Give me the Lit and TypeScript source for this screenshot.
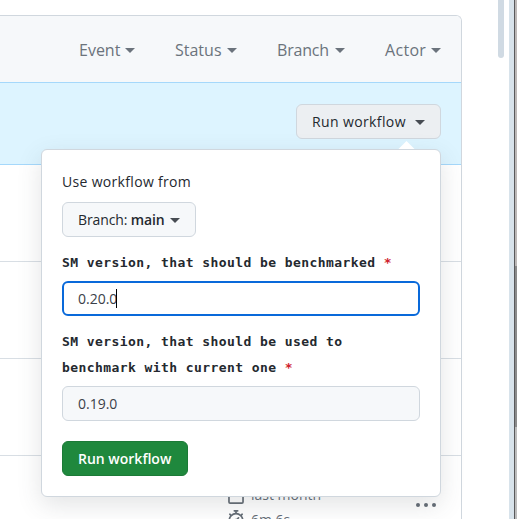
import { LitElement, html, css } from "lit";
import { customElement } from "lit/decorators.js";

@customElement("app-root")
export class AppRoot extends LitElement {
  static styles = css`
    :host {
      display: block;
      position: relative;
      width: 517px;
      height: 519px;
      overflow: hidden;
      background: #fff;
      font-family: "Open Sans", "Noto Sans", sans-serif;
      font-size: 14px;
      color: #24292f;
    }
    * { box-sizing: border-box; }
    .page { display: flex; height: 519px; }
    .list {
      width: 462px;
      margin-top: 15px;
      border: 1px solid #d0d7de;
      border-left: 0;
      border-bottom: 0;
      border-top-right-radius: 6px;
    }
    .filters {
      height: 66px;
      display: flex;
      justify-content: flex-end;
      align-items: center;
      gap: 40px;
      padding: 1px 20px 0 0;
      background: #f6f8fa;
      border-top-right-radius: 5px;
      color: #6b737c;
      font-size: 16px;
    }
    .filter { display: flex; align-items: center; justify-content: space-between; }
    .filter .caret { margin-top: 2px; }
    .event { width: 56px; letter-spacing: 0; }
    .status { width: 62px; letter-spacing: 0; }
    .branch { width: 68px; letter-spacing: -0.2px; }
    .actor { width: 56px; letter-spacing: 0.3px; }
    .caret {
      width: 0;
      height: 0;
      border: 5px solid transparent;
      border-top-color: currentColor;
      border-bottom: 0;
      flex: none;
      margin-top: 2px;
    }
    .banner {
      height: 83px;
      background: #ddf4ff;
      border: 1px solid #a5d8fb;
      border-width: 1px 0;
      display: flex;
      justify-content: flex-end;
      padding: 21px 20px 0 0;
    }
    .btn {
      height: 35px;
      display: flex;
      align-items: center;
      border: 1px solid #d0d7de;
      border-radius: 6px;
      padding: 0 15px;
      white-space: nowrap;
    }
    .btn .caret { border-top-color: #474c53; }
    .trigger { width: 145px; background: #eceff2; font-weight: 500; letter-spacing: 0.38px; justify-content: space-between; }
    .row { height: 97px; border-bottom: 1px solid #d8dee4; }
    .last { border: 0; padding: 29px 25px 0 227px; display: flex; justify-content: space-between; color: #656d76; }
    .meta { display: grid; gap: 5px; align-content: start; }
    .line { display: flex; align-items: center; gap: 6px; height: 19px; }
    .line svg { width: 18px; height: 18px; fill: currentColor; flex: none; }
    .duration { padding-top: 2px; }
    .dots { display: flex; gap: 4px; padding-top: 18px; }
    .dots i { width: 4px; height: 4px; border-radius: 50%; background: #656d76; }
    .gutter { width: 47px; display: flex; padding-left: 36px; }
    .thumb { width: 6px; height: 58px; border-radius: 0 0 3px 3px; background: #d0dae3; }
    .edge { width: 5px; background: #d8e3eb; }
    .rule { width: 1px; background: #59595b; }
    .outer { width: 2px; background: linear-gradient(#bcb8b7 0 266px, #8b8b8b 266px 427px, #bcbcbc 427px); }
    .pop {
      position: absolute;
      left: 41px;
      top: 149px;
      width: 400px;
      height: 348px;
      padding: 20px;
      background: #fff;
      border: 1px solid #d0d7de;
      border-radius: 6px;
      box-shadow: 0 8px 24px rgba(66, 74, 83, 0.15);
    }
    .tip {
      position: absolute;
      right: 25px;
      top: -9px;
      width: 17px;
      height: 8px;
      overflow: visible;
    }
    .use { height: 24px; line-height: 23px; margin-bottom: 8px; letter-spacing: 0.32px; }
    .pick { width: 134px; background: #f6f8fa; justify-content: space-between; letter-spacing: -0.12px; }
    b { font-weight: 600; }
    .label {
      font: 700 13px/26px "DejaVu Sans Mono", "Liberation Mono", monospace;
      letter-spacing: 0.42px;
      white-space: nowrap;
      margin-top: 13px;
      margin-bottom: 5px;
    }
    .star { color: #cf222e; }
    .field {
      height: 35px;
      border: 1px solid #d0d7de;
      border-radius: 6px;
      background: #f6f8fa;
      padding: 0 15px;
      display: flex;
      align-items: center;
      color: #3b4149;
    }
    .focus { background: #fff; border: 2px solid #0969da; padding: 0 14px; }
    .cursor { width: 1px; height: 19px; margin-left: -1px; background: #000; }
    .go { width: 126px; margin-top: 20px; background: #1f883d; border-color: #1c7a37; color: #fff; font-weight: 600; }
  `;

  private caret() {
    return html`<span class="caret"></span>`;
  }

  render() {
    return html`
      <div class="page">
        <div class="list">
          <div class="filters">
            ${["Event", "Status", "Branch", "Actor"].map(
              (name) => html`<div class="filter ${name.toLowerCase()}"><span>${name}</span>${this.caret()}</div>`
            )}
          </div>
          <div class="banner">
            <div class="btn trigger"><span>Run workflow</span>${this.caret()}</div>
          </div>
          <div class="row"></div>
          <div class="row"></div>
          <div class="row"></div>
          <div class="row last">
            <div class="meta">
              <div class="line">
                <svg viewBox="0 0 16 16"><path d="M4.75 0a.75.75 0 0 1 .75.75V2h5V.75a.75.75 0 0 1 1.5 0V2h1.25c.966 0 1.75.784 1.75 1.75v10.5A1.75 1.75 0 0 1 13.25 16H2.75A1.75 1.75 0 0 1 1 14.25V3.75C1 2.784 1.784 2 2.75 2H4V.75A.75.75 0 0 1 4.75 0ZM2.5 7.5v6.75c0 .138.112.25.25.25h10.5a.25.25 0 0 0 .25-.25V7.5Zm10.75-4H2.75a.25.25 0 0 0-.25.25V6h11V3.75a.25.25 0 0 0-.25-.25Z"/></svg>
                <span>last month</span>
              </div>
              <div class="line">
                <svg viewBox="0 0 16 16"><path d="M5.75.75A.75.75 0 0 1 6.5 0h3a.75.75 0 0 1 0 1.5h-.75v1l-.001.041a6.724 6.724 0 0 1 3.464 1.435l.007-.006.75-.75a.749.749 0 0 1 1.275.326.749.749 0 0 1-.215.734l-.75.75-.006.007a6.75 6.75 0 1 1-10.548 0L2.72 5.03l-.75-.75a.751.751 0 0 1 .018-1.042.751.751 0 0 1 1.042-.018l.75.75.007.006A6.72 6.72 0 0 1 7.25 2.541V1.5H6.5a.75.75 0 0 1-.75-.75ZM8 14.5a5.25 5.25 0 1 0-.001-10.501A5.25 5.25 0 0 0 8 14.5Zm.389-6.7 1.33-1.33a.75.75 0 1 1 1.061 1.06L9.45 8.861A1.503 1.503 0 0 1 8 10.75a1.499 1.499 0 1 1 .389-2.95Z"/></svg>
                <span class="duration">6m 6s</span>
              </div>
            </div>
            <div class="dots"><i></i><i></i><i></i></div>
          </div>
        </div>
        <div class="gutter"><div class="thumb"></div></div>
        <div class="edge"></div>
        <div class="rule"></div>
        <div class="outer"></div>
      </div>
      <div class="pop">
        <svg class="tip" viewBox="0 0 17 8"><path d="M0.5 8 8.5 0 16.5 8Z" fill="#fff"/></svg>
        <div class="use">Use workflow from</div>
        <div class="btn pick"><span>Branch: <b>main</b></span>${this.caret()}</div>
        <div class="label">SM version, that should be benchmarked <span class="star">*</span></div>
        <div class="field focus"><span>0.20.0</span><span class="cursor"></span></div>
        <div class="label">SM version, that should be used to<br />benchmark with current one <span class="star">*</span></div>
        <div class="field"><span>0.19.0</span></div>
        <div class="btn go"><span>Run workflow</span></div>
      </div>
    `;
  }
}
